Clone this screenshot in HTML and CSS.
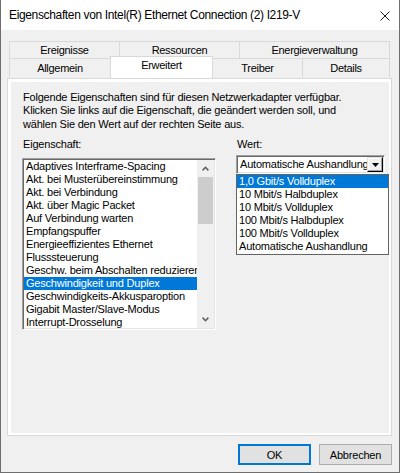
FILE: index.html
```html
<!DOCTYPE html>
<html lang="de">
<head>
<meta charset="utf-8">
<title>Eigenschaften</title>
<link rel="stylesheet" href="styles.css">
</head>
<body>
<div class="window">
  <div class="titlebar">
    <span class="title">Eigenschaften von Intel(R) Ethernet Connection (2) I219-V</span>
    <svg class="close" width="10" height="10" viewBox="0 0 10 10"><path d="M0.5 0.5L9.5 9.5M9.5 0.5L0.5 9.5" stroke="#1a1a1a" stroke-width="1" fill="none"/></svg>
  </div>
  <div class="client">
    <div class="tabs">
      <div class="tabrow row1">
        <div class="tab w-ereig">Ereignisse</div>
        <div class="tab w-res">Ressourcen</div>
        <div class="tab w-energ last">Energieverwaltung</div>
      </div>
      <div class="tabrow row2">
        <div class="tab w-allg">Allgemein</div>
        <div class="tab w-erw selected">Erweitert</div>
        <div class="tab w-treib noleft">Treiber</div>
        <div class="tab w-det last">Details</div>
      </div>
    </div>
    <div class="panel">
      <div class="page">
        <p class="desc">Folgende Eigenschaften sind für diesen Netzwerkadapter verfügbar.<br>Klicken Sie links auf die Eigenschaft, die geändert werden soll, und<br>wählen Sie den Wert auf der rechten Seite aus.</p>
        <div class="columns">
          <div class="col-left">
            <div class="label">Eigenschaft:</div>
            <div class="listbox">
              <ul class="items">
                <li>Adaptives Interframe-Spacing</li>
                <li>Akt. bei Musterübereinstimmung</li>
                <li>Akt. bei Verbindung</li>
                <li>Akt. über Magic Packet</li>
                <li>Auf Verbindung warten</li>
                <li>Empfangspuffer</li>
                <li>Energieeffizientes Ethernet</li>
                <li>Flusssteuerung</li>
                <li>Geschw. beim Abschalten reduzieren</li>
                <li class="sel">Geschwindigkeit und Duplex</li>
                <li>Geschwindigkeits-Akkusparoption</li>
                <li>Gigabit Master/Slave-Modus</li>
                <li>Interrupt-Drosselung</li>
              </ul>
              <div class="scrollbar">
                <div class="sb-btn"><svg width="7" height="5" viewBox="0 0 7 5"><polyline points="0.6,4.4 3.5,1.3 6.4,4.4" fill="none" stroke="#606060" stroke-width="1.6"/></svg></div>
                <div class="sb-track"><div class="sb-thumb"></div></div>
                <div class="sb-btn"><svg width="7" height="5" viewBox="0 0 7 5"><polyline points="0.6,0.6 3.5,3.7 6.4,0.6" fill="none" stroke="#606060" stroke-width="1.6"/></svg></div>
              </div>
            </div>
          </div>
          <div class="col-right">
            <div class="label">Wert:</div>
            <div class="combo">
              <span class="combo-text">Automatische Aushandlung</span>
              <span class="combo-btn"><svg width="7" height="4" viewBox="0 0 7 4"><polygon points="0,0 7,0 3.5,4" fill="#000"/></svg></span>
            </div>
            <ul class="dropdown">
              <li class="sel">1,0 Gbit/s Vollduplex</li>
              <li>10 Mbit/s Halbduplex</li>
              <li>10 Mbit/s Vollduplex</li>
              <li>100 Mbit/s Halbduplex</li>
              <li>100 Mbit/s Vollduplex</li>
              <li>Automatische Aushandlung</li>
            </ul>
          </div>
        </div>
      </div>
    </div>
    <div class="buttons">
      <button class="btn default">OK</button>
      <button class="btn">Abbrechen</button>
    </div>
  </div>
</div>
</body>
</html>
```

FILE: styles.css
```css
* { box-sizing: border-box; }
html, body { margin: 0; padding: 0; }
body {
  font-family: "Liberation Sans", Arial, sans-serif;
  font-size: 11px;
  letter-spacing: -0.2px;
  color: #000;
  background: #f0f0f0;
}
.window {
  width: 400px;
  height: 473px;
  border: 1px solid #6e6e6e;
  border-top: none;
  background: #f0f0f0;
  display: flex;
  flex-direction: column;
}
.titlebar {
  height: 30px;
  background: #fff;
  display: flex;
  align-items: center;
  padding-left: 8px;
  flex: none;
}
.title { font-size: 12px; line-height: 16px; letter-spacing: -0.35px; }
.close { margin-left: auto; margin-right: 9px; margin-top: 2px; }
.client {
  flex: 1;
  padding: 11px 6px 0 6px;
  display: flex;
  flex-direction: column;
}
.tabs { margin-left: 2px; width: 381px; }
.tabrow { display: flex; align-items: flex-start; }
.tab {
  border-top: 1px solid #d9d9d9;
  border-left: 1px solid #d9d9d9;
  background: #f0f0f0;
  text-align: center;
  white-space: nowrap;
  letter-spacing: -0.3px;
}
.tab.last { border-right: 1px solid #d9d9d9; }
.tab.noleft { border-left: none; }
.row1 .tab { height: 17px; line-height: 16px; }
.row2 .tab { height: 19px; line-height: 18px; }
.w-ereig { width: 110px; }
.w-res { width: 120px; }
.w-energ { width: 151px; }
.w-allg { width: 101px; }
.w-erw { width: 103px; }
.w-treib { width: 89px; }
.w-det { width: 88px; }
.row2 .tab.selected {
  position: relative;
  z-index: 1;
  margin-top: -2px;
  height: 22px;
  line-height: 17px;
  background: #fff;
  border-right: 1px solid #d9d9d9;
}
.panel {
  width: 385px;
  height: 358px;
  border: 1px solid #d9d9d9;
  background: #fff;
  padding: 3px 2px 2px 3px;
  flex: none;
}
.page {
  height: 100%;
  background: #f0f0f0;
  padding: 9px 0 0 11px;
}
.desc {
  margin: 0;
  padding-left: 1px;
  line-height: 13.4px;
  white-space: nowrap;
}
.columns {
  display: flex;
  margin-top: 7px;
  gap: 20px;
  align-items: flex-start;
}
.label { line-height: 13px; padding-left: 1px; }
.col-left { width: 194px; }
.col-left .label { margin-bottom: 7px; }
.col-right { width: 153px; }
.col-right .label { margin-bottom: 4px; }
.listbox {
  width: 194px;
  height: 172px;
  border: 1px solid;
  border-color: #a0a0a0 #fff #fff #a0a0a0;
  box-shadow: inset 1px 1px 0 #696969, inset -1px -1px 0 #e3e3e3;
  padding: 1px;
  background: #fff;
  display: flex;
  overflow: hidden;
}
.items {
  list-style: none;
  margin: 0;
  padding: 0;
  flex: 1;
  overflow: hidden;
  background: #fff;
}
.items li, .dropdown li {
  height: 13px;
  line-height: 13px;
  padding-left: 2px;
  white-space: nowrap;
  overflow: hidden;
}
.items li.sel, .dropdown li.sel { background: #0078d7; color: #fff; }
.scrollbar {
  width: 17px;
  flex: none;
  background: #f0f0f0;
  display: flex;
  flex-direction: column;
}
.sb-btn {
  height: 17px;
  display: flex;
  align-items: center;
  justify-content: center;
  flex: none;
}
.sb-track { flex: 1; }
.sb-thumb { height: 47px; margin: 0 1px; background: #cdcdcd; }
.combo {
  width: 149px;
  height: 19px;
  border: 1px solid;
  border-color: #a0a0a0 #fff #fff #a0a0a0;
  box-shadow: inset 1px 1px 0 #696969, inset -1px -1px 0 #e3e3e3;
  padding: 1px;
  background: #fff;
  display: flex;
  align-items: stretch;
}
.combo-text {
  flex: 1;
  overflow: hidden;
  white-space: nowrap;
  line-height: 15px;
  padding-left: 2px;
}
.combo-btn {
  width: 16px;
  flex: none;
  background: #f0f0f0;
  border: 1px solid;
  border-color: #e3e3e3 #000 #000 #e3e3e3;
  box-shadow: inset -1px -1px 0 #a0a0a0, inset 1px 1px 0 #fff;
  display: flex;
  align-items: center;
  justify-content: center;
}
.dropdown {
  list-style: none;
  margin: 0;
  padding: 0 0 1px 0;
  width: 153px;
  border: 1px solid #646464;
  background: #fff;
}
.buttons {
  display: flex;
  justify-content: flex-end;
  gap: 8px;
  margin-top: 8px;
  padding-right: 1px;
}
.btn {
  width: 73px;
  height: 21px;
  font-family: "Liberation Sans", Arial, sans-serif;
  font-size: 11px;
  letter-spacing: -0.2px;
  color: #000;
  background: #e1e1e1;
  border: 1px solid #adadad;
  padding: 0;
  margin: 0;
}
.btn.default { border: 2px solid #0078d7; }
```
